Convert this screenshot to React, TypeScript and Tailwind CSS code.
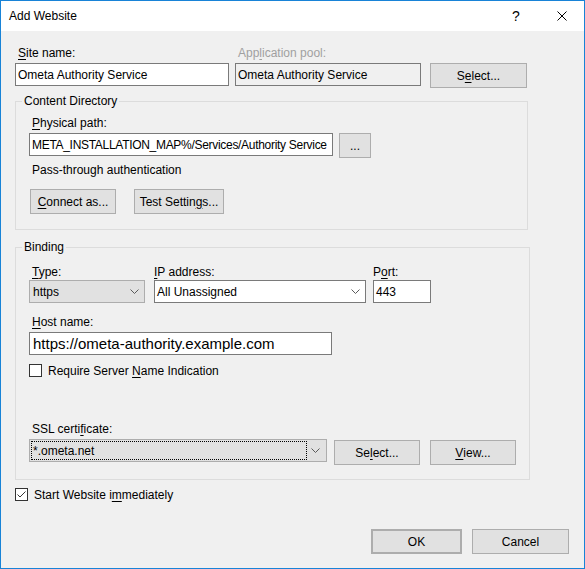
import type { ReactElement, ReactNode } from "react";

function Key({ children }: { children: ReactNode }): ReactElement {
  return <span className="underline underline-offset-[2px]">{children}</span>;
}

function Label({
  children,
  className = "",
}: {
  children: ReactNode;
  className?: string;
}): ReactElement {
  return <div className={`h-4 whitespace-nowrap leading-4 ${className}`}>{children}</div>;
}

function Button({
  children,
  className = "",
}: {
  children: ReactNode;
  className?: string;
}): ReactElement {
  return (
    <div
      className={`flex h-[25px] shrink-0 items-center justify-center whitespace-nowrap border border-[#adadad] bg-[#e1e1e1] ${className}`}
    >
      {children}
    </div>
  );
}

function Chevron(): ReactElement {
  return (
    <svg width="9" height="5" viewBox="0 0 9 5" className="shrink-0">
      <path d="M0.5 0.5 L4.5 4.5 L8.5 0.5" fill="none" stroke="#5a5a5a" strokeWidth="1" />
    </svg>
  );
}

function CheckBox({ checked = false }: { checked?: boolean }): ReactElement {
  return (
    <span className="flex size-[13px] shrink-0 items-center justify-center border border-[#333333] bg-white">
      {checked && (
        <svg width="11" height="11" viewBox="0 0 11 11">
          <path d="M1.5 5.5 L4 8 L9.5 2.5" fill="none" stroke="#333333" strokeWidth="1" />
        </svg>
      )}
    </span>
  );
}

export default function App(): ReactElement {
  return (
    <div className="flex h-[569px] w-[585px] flex-col border border-[#1883d7] bg-[#f0f0f0] font-['Liberation_Sans',Arial,sans-serif] text-[12px] leading-4 text-black">
      {/* title bar */}
      <div className="flex h-[30px] shrink-0 items-center bg-white pl-[8px] pr-[17px]">
        <span>Add Website</span>
        <span className="ml-auto mr-[35px] w-[12px] text-center text-[14px]">?</span>
        <svg width="10" height="10" viewBox="0 0 10 10">
          <path d="M0.5 0.5 L9.5 9.5 M9.5 0.5 L0.5 9.5" stroke="#000000" strokeWidth="1" />
        </svg>
      </div>

      <div className="px-[14px] pt-[14px]">
        {/* site name row */}
        <div className="flex items-start">
          <div className="w-[214px]">
            <Label className="pl-[3px]">
              <Key>S</Key>ite name:
            </Label>
            <div className="mt-[2px] flex h-[23px] items-center border border-[#7a7a7a] bg-white pl-[2px]">
              Ometa Authority Service
            </div>
          </div>
          <div className="ml-[6px] w-[186px]">
            <Label className="pl-[3px] text-[#a0a0a0]">
              App<Key>l</Key>ication pool:
            </Label>
            <div className="mt-[2px] flex h-[23px] items-center border border-[#7a7a7a] bg-[#f0f0f0] pl-[2px]">
              Ometa Authority Service
            </div>
          </div>
          <Button className="ml-[9px] mt-[18px] w-[97px]">
            S<Key>e</Key>lect...
          </Button>
        </div>

        {/* content directory */}
        <fieldset className="mt-[5px] w-[513px] border border-[#dcdcdc]">
          <legend className="ml-[6px] px-[2px] leading-4">Content Directory</legend>
          <div className="px-[13px] pb-[15px] pt-[6px]">
            <Label className="pl-[3px]">
              <Key>P</Key>hysical path:
            </Label>
            <div className="mt-[2px] flex items-start">
              <div className="flex h-[23px] w-[304px] items-center overflow-hidden whitespace-nowrap border border-[#7a7a7a] bg-white pl-[2px] tracking-[-0.3px]">
                META_INSTALLATION_MAP%/Services/Authority Service
              </div>
              <Button className="ml-[6px] w-[32px]">...</Button>
            </div>
            <Label className="mt-[4px] pl-[3px]">Pass-through authentication</Label>
            <div className="ml-[1px] mt-[11px] flex">
              <Button className="w-[86px]">
                <Key>C</Key>onnect as...
              </Button>
              <Button className="ml-[18px] w-[90px]">
                Test Settin<Key>g</Key>s...
              </Button>
            </div>
          </div>
        </fieldset>

        {/* binding */}
        <fieldset className="mt-[9px] w-[513px] border border-[#dcdcdc]">
          <legend className="ml-[6px] px-[2px] leading-4">Binding</legend>
          <div className="px-[13px] pb-[14px] pt-[9px]">
            <div className="flex items-start">
              <div className="w-[116px]">
                <Label className="pl-[3px]">
                  <Key>T</Key>ype:
                </Label>
                <div className="flex h-[23px] items-center border border-[#adadad] bg-[#e1e1e1] pl-[3px] pr-[5px]">
                  <span>https</span>
                  <span className="ml-auto">
                    <Chevron />
                  </span>
                </div>
              </div>
              <div className="ml-[9px] w-[212px]">
                <Label>
                  <Key>I</Key>P address:
                </Label>
                <div className="flex h-[23px] items-center border border-[#7a7a7a] bg-white pl-[2px] pr-[5px]">
                  <span>All Unassigned</span>
                  <span className="ml-auto">
                    <Chevron />
                  </span>
                </div>
              </div>
              <div className="ml-[7px] w-[58px]">
                <Label>
                  P<Key>o</Key>rt:
                </Label>
                <div className="flex h-[23px] items-center border border-[#7a7a7a] bg-white pl-[2px]">
                  443
                </div>
              </div>
            </div>

            <Label className="mt-[11px] pl-[3px]">
              <Key>H</Key>ost name:
            </Label>
            <div className="mt-[2px] flex h-[23px] w-[303px] items-center whitespace-nowrap border border-[#7a7a7a] bg-white pl-[3px] text-[15px]">
              https://ometa-authority.example.com
            </div>

            <div className="mt-[9px] flex h-[13px] items-center">
              <CheckBox />
              <span className="ml-[6px] whitespace-nowrap">
                Require Server <Key>N</Key>ame Indication
              </span>
            </div>

            <Label className="mt-[44px] pl-[3px]">
              SSL certi<Key>f</Key>icate:
            </Label>
            <div className="mt-[2px] flex items-start">
              <div className="flex h-[23px] w-[298px] items-center border border-[#adadad] bg-[#e1e1e1] p-px pr-[6px]">
                <span className="flex h-full w-[276px] items-center border border-dotted border-black pl-px">
                  *.ometa.net
                </span>
                <span className="ml-auto">
                  <Chevron />
                </span>
              </div>
              <Button className="ml-[7px] mt-px w-[86px]">
                Se<Key>l</Key>ect...
              </Button>
              <Button className="ml-[10px] mt-px w-[86px]">
                <Key>V</Key>iew...
              </Button>
            </div>
          </div>
        </fieldset>

        <div className="mt-[8px] flex h-[13px] items-center">
          <CheckBox checked />
          <span className="ml-[6px] whitespace-nowrap">
            Start Website i<Key>m</Key>mediately
          </span>
        </div>

        <div className="mt-[28px] flex justify-end pr-px">
          <Button className="w-[91px] border-2 border-[#0078d7]">OK</Button>
          <Button className="ml-[10px] w-[97px]">Cancel</Button>
        </div>
      </div>
    </div>
  );
}
